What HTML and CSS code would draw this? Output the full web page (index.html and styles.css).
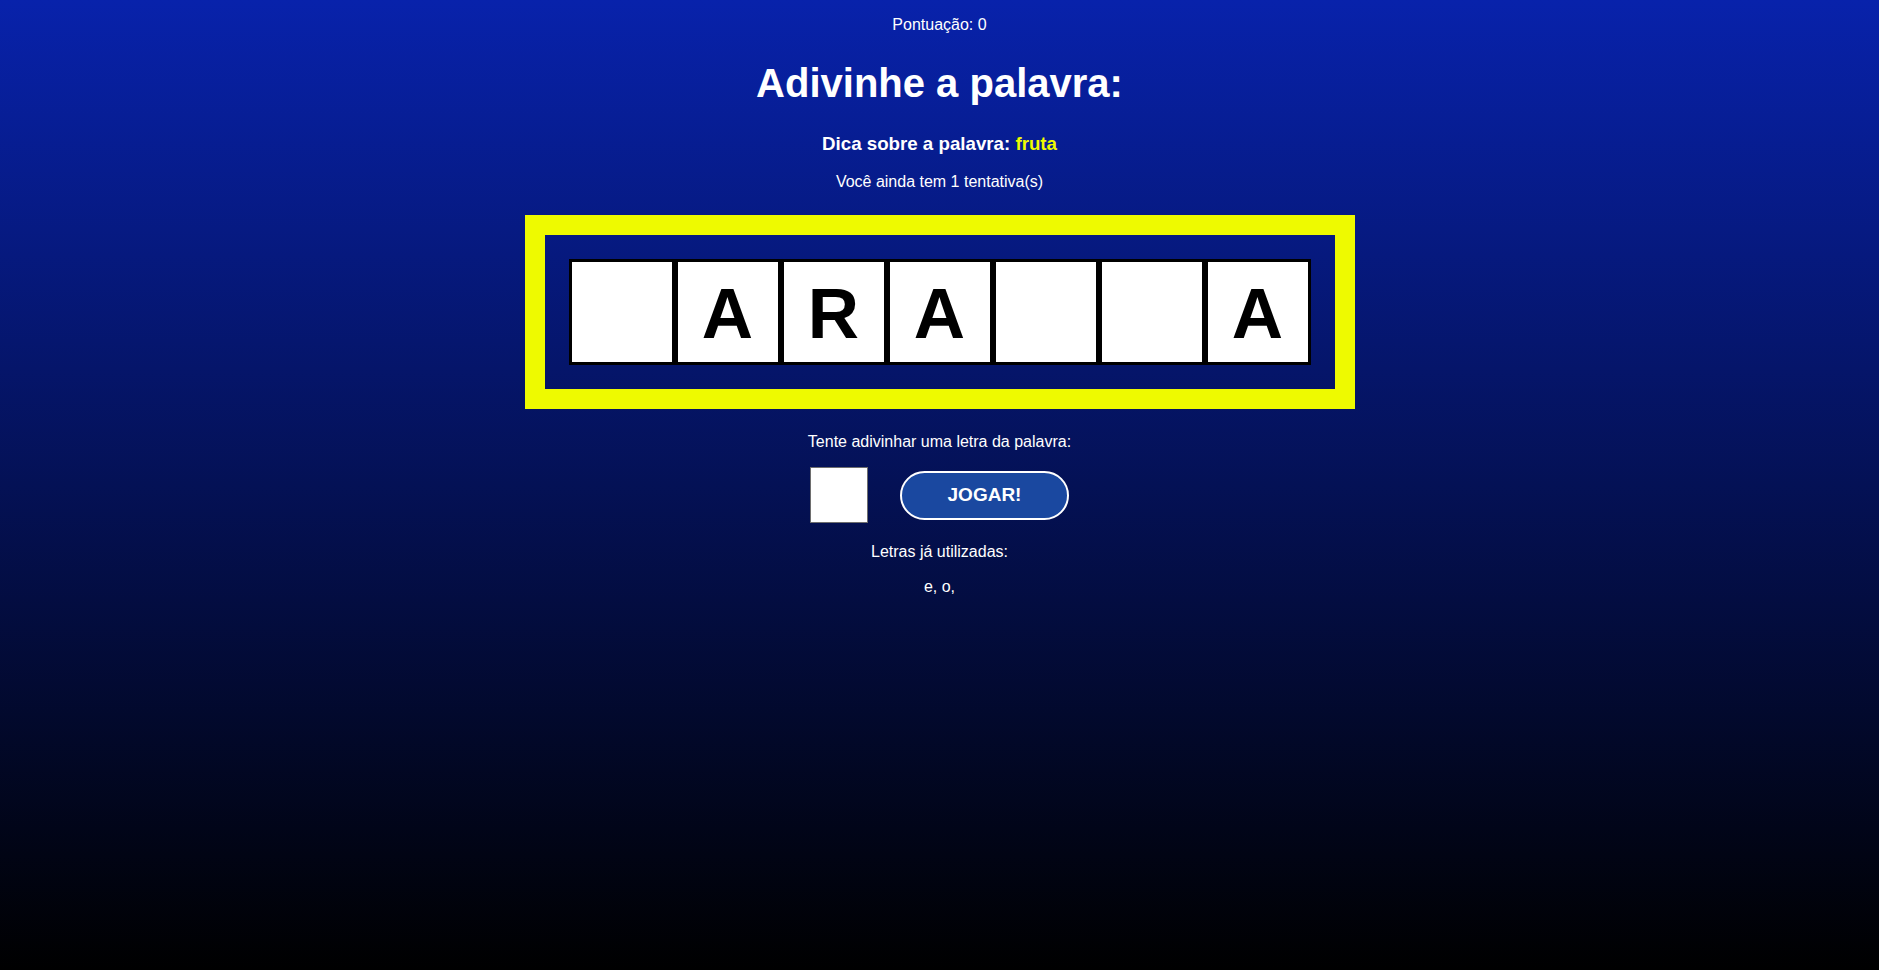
FILE: index.html
```html
<!DOCTYPE html>
<html lang="pt-BR">
<head>
<meta charset="utf-8">
<title>Adivinhe a palavra</title>
<link rel="stylesheet" href="styles.css">
</head>
<body>
<main class="game">
  <p class="score">Pontuação: 0</p>
  <h1 class="title">Adivinhe a palavra:</h1>
  <h3 class="hint">Dica sobre a palavra: <span class="hint-word">fruta</span></h3>
  <p class="tries">Você ainda tem 1 tentativa(s)</p>
  <div class="frame">
    <div class="tiles">
      <div class="tile"></div>
      <div class="tile">A</div>
      <div class="tile">R</div>
      <div class="tile">A</div>
      <div class="tile"></div>
      <div class="tile"></div>
      <div class="tile">A</div>
    </div>
  </div>
  <p class="prompt">Tente adivinhar uma letra da palavra:</p>
  <div class="controls">
    <input class="letter-input" type="text" maxlength="1">
    <button class="play-btn" type="button">JOGAR!</button>
  </div>
  <p class="used-label">Letras já utilizadas:</p>
  <p class="used">e, o,</p>
</main>
</body>
</html>
```

FILE: styles.css
```css
html, body {
  margin: 0;
  padding: 0;
  height: 100%;
}

body {
  background: linear-gradient(to bottom, #0822ab 0%, #000000 100%);
  font-family: "Liberation Sans", Arial, sans-serif;
  color: #ffffff;
  min-height: 970px;
}

.game {
  display: flex;
  flex-direction: column;
  align-items: center;
  text-align: center;
}

.score {
  margin: 16px 0 0;
  font-size: 16px;
  line-height: 18px;
}

.title {
  margin: 26px 0 0;
  font-size: 40px;
  line-height: 46px;
  font-weight: bold;
}

.hint {
  margin: 27px 0 0;
  font-size: 18.72px;
  line-height: 22px;
  font-weight: bold;
}

.hint-word {
  color: #eefa00;
}

.tries {
  margin: 18px 0 0;
  font-size: 16px;
  line-height: 18px;
}

.frame {
  margin-top: 24px;
  border: 20px solid #eefa00;
  padding: 24px;
}

.tiles {
  display: flex;
}

.tile {
  box-sizing: content-box;
  width: 100px;
  height: 97px;
  padding-top: 3px;
  border: 3px solid #000000;
  background: #ffffff;
  color: #000000;
  font-size: 71px;
  font-weight: bold;
  line-height: 97px;
  text-align: center;
}

.prompt {
  margin: 24px 0 0;
  font-size: 16px;
  line-height: 18px;
}

.controls {
  margin-top: 16px;
  display: flex;
  align-items: center;
  gap: 32px;
}

.letter-input {
  box-sizing: border-box;
  width: 58px;
  height: 56px;
  margin: 0;
  padding: 0;
  border: 1px solid #6e6e6e;
  background: #ffffff;
  font-family: "Liberation Sans", Arial, sans-serif;
  font-size: 24px;
  text-align: center;
}

.play-btn {
  box-sizing: border-box;
  width: 169px;
  height: 49px;
  margin: 0;
  border: 2px solid #ffffff;
  border-radius: 25px;
  background: #1a48a0;
  color: #ffffff;
  font-family: "Liberation Sans", Arial, sans-serif;
  font-size: 19px;
  font-weight: bold;
}

.used-label {
  margin: 20px 0 0;
  font-size: 16px;
  line-height: 18px;
}

.used {
  margin: 17px 0 0;
  font-size: 16px;
  line-height: 18px;
}
```
